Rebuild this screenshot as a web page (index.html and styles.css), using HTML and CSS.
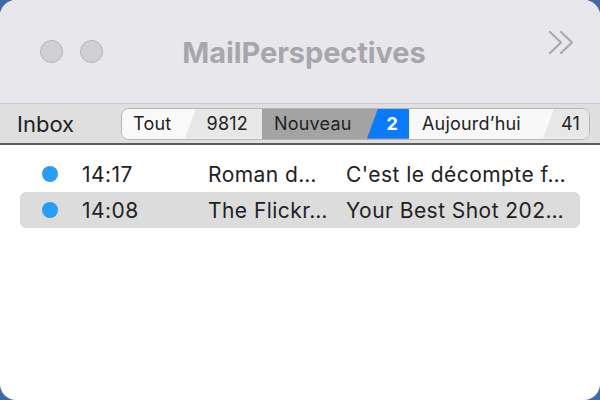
FILE: index.html
```html
<!DOCTYPE html>
<html lang="fr">
<head>
<meta charset="utf-8">
<title>MailPerspectives</title>
<link rel="stylesheet" href="styles.css">
</head>
<body>
<div class="window">
  <header class="titlebar">
    <div class="lights">
      <span class="light"></span>
      <span class="light"></span>
    </div>
    <div class="title">MailPerspectives</div>
    <div class="more">
      <svg width="28" height="26" viewBox="0 0 28 26" aria-hidden="true">
        <path d="M2 2 L13 12.5 L2 23" fill="none" stroke="#a9a9ad" stroke-width="2.2" stroke-linecap="round" stroke-linejoin="round"/>
        <path d="M13 2 L24 12.5 L13 23" fill="none" stroke="#a9a9ad" stroke-width="2.2" stroke-linecap="round" stroke-linejoin="round"/>
      </svg>
    </div>
  </header>
  <div class="toolbar">
    <div class="inbox">Inbox</div>
    <div class="segments">
      <div class="seg seg-all">
        <span class="label">Tout</span>
        <span class="count">9812</span>
      </div>
      <div class="seg seg-new">
        <span class="label">Nouveau</span>
        <span class="count">2</span>
      </div>
      <div class="seg seg-today">
        <span class="label">Aujourd’hui</span>
        <span class="count">41</span>
      </div>
    </div>
  </div>
  <main class="list">
    <div class="row">
      <span class="dot"></span>
      <span class="time">14:17</span>
      <span class="sender">Roman d…</span>
      <span class="subject">C'est le décompte f…</span>
    </div>
    <div class="row selected">
      <span class="dot"></span>
      <span class="time">14:08</span>
      <span class="sender">The Flickr…</span>
      <span class="subject">Your Best Shot 202…</span>
    </div>
  </main>
</div>
</body>
</html>
```

FILE: styles.css
```css
html, body {
  margin: 0;
  padding: 0;
  width: 600px;
  height: 400px;
  background: #3f6aa7;
  overflow: hidden;
  font-family: "Inter", "Liberation Sans", sans-serif;
}

.window {
  width: 600px;
  height: 400px;
  border-radius: 16px;
  overflow: hidden;
  background: #ffffff;
  display: flex;
  flex-direction: column;
}

.titlebar {
  height: 103px;
  background: #e8e8ec;
  display: grid;
  grid-template-columns: 1fr auto 1fr;
  align-items: center;
}

.lights {
  display: flex;
  gap: 17px;
  padding-left: 40px;
}

.light {
  width: 21px;
  height: 21px;
  border-radius: 50%;
  background: #d1d1d5;
  border: 1px solid #b3b3b7;
}

.title {
  font-weight: 700;
  font-size: 29px;
  color: #a7a7ab;
  letter-spacing: -0.1px;
  padding-top: 2px;
  padding-left: 8px;
}

.more {
  justify-self: end;
  align-self: start;
  padding-top: 30px;
  padding-right: 24px;
}

.more svg {
  display: block;
}

.toolbar {
  height: 39px;
  border-top: 1px solid #c9c9cb;
  border-bottom: 2px solid #5b5b5b;
  background: #dfdfdf;
  display: flex;
  align-items: center;
}

.inbox {
  width: 121px;
  padding-left: 17px;
  box-sizing: border-box;
  font-size: 22px;
  color: #222;
}

.segments {
  display: flex;
  height: 30px;
  border: 1.5px solid #b5b5b5;
  border-radius: 8px;
  overflow: hidden;
  font-size: 18px;
  letter-spacing: 0.2px;
  color: #222;
}

.seg {
  display: flex;
  align-items: center;
  height: 100%;
}

.label {
  display: flex;
  align-items: center;
  height: 100%;
  box-sizing: border-box;
}

.count {
  display: flex;
  align-items: center;
  justify-content: flex-end;
  height: 100%;
  box-sizing: border-box;
  clip-path: polygon(11px 0, 100% 0, 100% 100%, 0 100%);
}

.seg-all { background: #f9f9f9; }
.seg-all .label { width: 63px; padding-left: 11px; }
.seg-all .count { width: 77px; padding-right: 14px; background: #e7e7e7; }

.seg-new { background: #a3a3a3; }
.seg-new .label { width: 105px; padding-left: 12px; }
.seg-new .count {
  width: 42px;
  padding-right: 11px;
  background: #0a7bff;
  color: #fff;
  font-weight: 700;
}

.seg-today { background: #f8f8f8; }
.seg-today .label { width: 134px; padding-left: 13px; }
.seg-today .count { width: 46px; padding-right: 9px; background: #e7e7e7; }

.list {
  flex: 1;
  padding-top: 11px;
}

.row {
  display: flex;
  align-items: center;
  height: 36px;
  margin: 0 20px;
  border-radius: 6px;
  font-size: 21px;
  letter-spacing: 0.45px;
  color: #222;
}

.row.selected {
  background: #dcdcdc;
}

.dot {
  width: 16px;
  height: 16px;
  border-radius: 50%;
  background: #2a9cf5;
  margin-left: 22px;
  margin-right: 24px;
  flex: none;
}

.time { width: 126px; flex: none; }
.sender { width: 138px; flex: none; white-space: nowrap; }
.subject { white-space: nowrap; }
```
